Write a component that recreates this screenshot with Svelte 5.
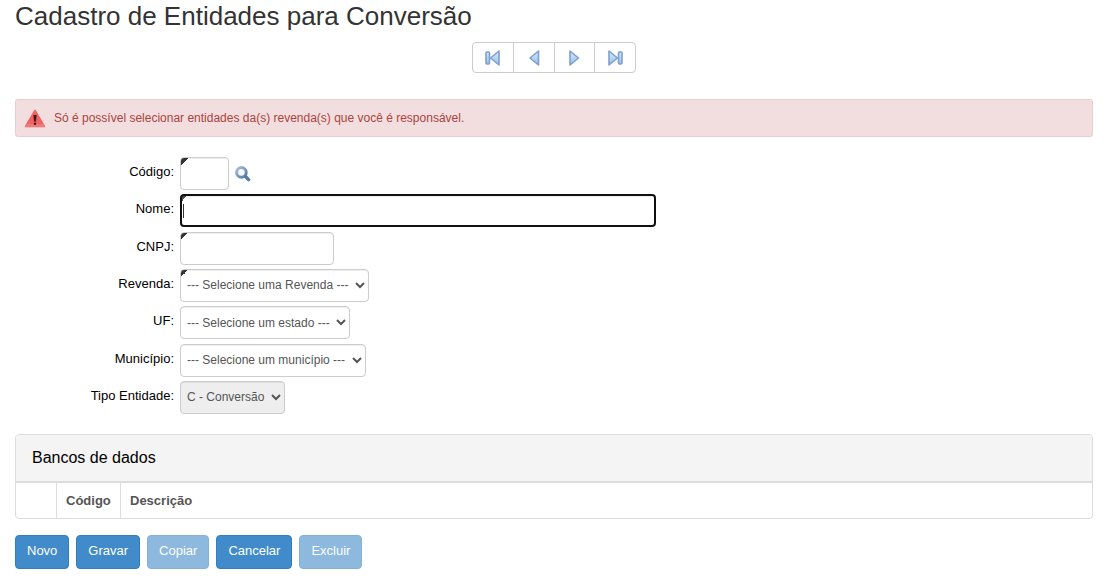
<script>
  import { onMount } from 'svelte';

  let codigo = $state('');
  let nome = $state('');
  let cnpj = $state('');
  let revenda = $state('');
  let uf = $state('');
  let municipio = $state('');
  let tipo = $state('C');
  let nomeInput;

  const buttons = [
    { label: 'Novo', disabled: false },
    { label: 'Gravar', disabled: false },
    { label: 'Copiar', disabled: true },
    { label: 'Cancelar', disabled: false },
    { label: 'Excluir', disabled: true }
  ];

  const navButtons = [
    { title: 'Primeiro', bar: 2, points: '15,2 15,16 6.5,9' },
    { title: 'Anterior', bar: null, points: '13.5,2 13.5,16 5,9' },
    { title: 'Próximo', bar: null, points: '5,2 5,16 13.5,9' },
    { title: 'Último', bar: 12.5, points: '3,2 3,16 11.5,9' }
  ];

  onMount(() => nomeInput.focus());
</script>

<svg class="defs" width="0" height="0" aria-hidden="true">
  <linearGradient id="nav-fill" x1="0" y1="0" x2="0" y2="1">
    <stop offset="0" stop-color="#d8eaf4" />
    <stop offset="1" stop-color="#93c2ea" />
  </linearGradient>
  <linearGradient id="lens" x1="0" y1="0" x2="1" y2="1">
    <stop offset="0" stop-color="#b0bfd0" />
    <stop offset="1" stop-color="#4a78ae" />
  </linearGradient>
</svg>

<main>
  <h1>Cadastro de Entidades para Conversão</h1>

  <nav>
    {#each navButtons as item}
      <button type="button" aria-label={item.title}>
        <svg width="18" height="18" viewBox="0 0 18 18">
          {#if item.bar !== null}
            <rect x={item.bar} y="3" width="3.5" height="12" rx="1" />
          {/if}
          <polygon points={item.points} />
        </svg>
      </button>
    {/each}
  </nav>

  <div class="alert" role="alert">
    <svg width="22" height="20" viewBox="0 0 22 20">
      <path d="M11 2.5 L20.4 18.5 H1.6 Z" fill="#ee6464" stroke="#ee6464" stroke-width="1.6" stroke-linejoin="round" />
      <path d="M2.4 16 H19.6 L21 19 H1 Z" fill="#f07a7a" />
      <path d="M9.4 7 H12.6 L12 13.4 H10 Z" fill="#4d1515" />
      <rect x="9.8" y="14.6" width="2.4" height="2.4" rx="1" fill="#4d1515" />
    </svg>
    <span>Só é possível selecionar entidades da(s) revenda(s) que você é responsável.</span>
  </div>

  <form onsubmit={(e) => e.preventDefault()}>
    <div class="row">
      <label for="codigo">Código:</label>
      <input id="codigo" class="required small" type="text" bind:value={codigo} />
      <button class="search" type="button" aria-label="Pesquisar">
        <svg width="16" height="16" viewBox="0 0 16 16">
          <path d="M10.5 10.5 L13.6 13.6" stroke="#5479aa" stroke-width="3.4" stroke-linecap="round" />
          <circle cx="6.4" cy="6.4" r="4.8" fill="#f4f8fc" stroke="url(#lens)" stroke-width="3" />
        </svg>
      </button>
    </div>
    <div class="row">
      <label for="nome">Nome:</label>
      <input id="nome" class="required large" class:empty={nome === ''} type="text" bind:value={nome} bind:this={nomeInput} />
    </div>
    <div class="row">
      <label for="cnpj">CNPJ:</label>
      <input id="cnpj" class="required medium" type="text" bind:value={cnpj} />
    </div>
    <div class="row">
      <label for="revenda">Revenda:</label>
      <select id="revenda" class="required" bind:value={revenda}>
        <option value="">--- Selecione uma Revenda ---</option>
      </select>
    </div>
    <div class="row">
      <label for="uf">UF:</label>
      <select id="uf" bind:value={uf}>
        <option value="">--- Selecione um estado ---</option>
      </select>
    </div>
    <div class="row">
      <label for="municipio">Município:</label>
      <select id="municipio" bind:value={municipio}>
        <option value="">--- Selecione um município ---</option>
      </select>
    </div>
    <div class="row">
      <label for="tipo">Tipo Entidade:</label>
      <select id="tipo" bind:value={tipo} disabled>
        <option value="C">C - Conversão</option>
      </select>
    </div>
  </form>

  <section class="panel">
    <h2>Bancos de dados</h2>
    <table>
      <thead>
        <tr>
          <th class="check"></th>
          <th class="code">Código</th>
          <th>Descrição</th>
        </tr>
      </thead>
    </table>
  </section>

  <div class="actions">
    {#each buttons as button}
      <button type="button" disabled={button.disabled}>{button.label}</button>
    {/each}
  </div>
</main>

<style>
  :global(body) {
    margin: 0;
    background: #fff;
  }

  .defs {
    position: absolute;
  }

  main {
    padding: 0 14px 0 15px;
    font-family: "Liberation Sans", Arial, sans-serif;
    font-size: 13px;
    color: #000;
  }

  main * {
    box-sizing: border-box;
  }

  h1 {
    margin: 0 0 10px;
    font-size: 26px;
    font-weight: 400;
    line-height: 32px;
    color: #333;
  }

  nav {
    display: flex;
    width: 164px;
    margin: 0 auto 26px;
    border: 1px solid #ccc;
    border-radius: 4px;
  }

  nav button {
    display: flex;
    flex: 1;
    align-items: center;
    justify-content: center;
    height: 29px;
    padding: 0;
    border: none;
    border-left: 1px solid #ccc;
    background: transparent;
    cursor: pointer;
  }

  nav button:first-child {
    border-left: none;
  }

  nav svg {
    fill: url(#nav-fill);
    stroke: #7f9fd0;
    stroke-width: 1.6;
    stroke-linejoin: round;
  }

  .alert {
    display: flex;
    align-items: center;
    gap: 8px;
    min-height: 38px;
    margin-bottom: 20px;
    padding: 0 8px;
    border: 1px solid #ebccd1;
    border-radius: 3px;
    background: #f2dede;
    color: #a94442;
    font-size: 12px;
  }

  form {
    display: flex;
    flex-direction: column;
    justify-content: space-between;
    min-height: 257px;
    margin-bottom: 20px;
  }

  .row {
    display: flex;
    align-items: center;
  }

  label {
    width: 159px;
    margin-right: 6px;
    padding-bottom: 4px;
    text-align: right;
  }

  input,
  select {
    height: 33px;
    margin: 0;
    padding: 2px;
    border: 1px solid #ccc;
    border-radius: 4px;
    background-color: #fff;
    box-shadow: inset 0 1px 1px rgba(0, 0, 0, 0.075);
    color: #555;
    font-family: inherit;
    font-size: 12px;
  }

  select {
    padding-right: 3px;
  }

  .required {
    background-image: linear-gradient(135deg, #333 50%, transparent 50%);
    background-repeat: no-repeat;
    background-size: 7px 7px;
  }

  input:focus {
    padding: 1px;
    border: 2px solid #101010;
    outline: none;
    background-size: 5px 5px;
  }

  /* steady caret while nothing has been typed */
  .empty:focus {
    caret-color: transparent;
    background-image: linear-gradient(135deg, #555 50%, transparent 50%), linear-gradient(#333, #333);
    background-position: 0 0, 1px center;
    background-size: 5px 5px, 1px 14px;
  }

  select:disabled {
    background-color: #eee;
    opacity: 1;
  }

  .small {
    width: 49px;
  }

  .medium {
    width: 154px;
  }

  .large {
    width: 476px;
  }

  .search {
    display: flex;
    margin-left: 6px;
    padding: 0;
    border: none;
    background: none;
    cursor: pointer;
  }

  .panel {
    margin-bottom: 16px;
    border: 1px solid #ddd;
    border-radius: 4px;
    overflow: hidden;
  }

  h2 {
    margin: 0;
    padding: 0 16px;
    border-bottom: 2px solid #ddd;
    background: #f4f4f4;
    font-size: 16px;
    font-weight: 400;
    line-height: 46px;
  }

  table {
    width: 100%;
    border-collapse: separate;
    border-spacing: 0;
    table-layout: fixed;
  }

  th {
    height: 35px;
    padding: 0 9px;
    color: #555;
    text-align: left;
  }

  .check {
    width: 41px;
    border-right: 1px solid #ddd;
  }

  .code {
    width: 64px;
    border-right: 1px solid #ddd;
  }

  .actions {
    display: flex;
    gap: 7px;
    padding-bottom: 16px;
  }

  .actions button {
    height: 34px;
    padding: 0 11px 3px;
    border: 1px solid #357ebd;
    border-radius: 4px;
    background: #428bca;
    color: #fff;
    font-family: inherit;
    font-size: 13px;
    cursor: pointer;
  }

  .actions button:disabled {
    opacity: 0.6;
    cursor: default;
  }
</style>
